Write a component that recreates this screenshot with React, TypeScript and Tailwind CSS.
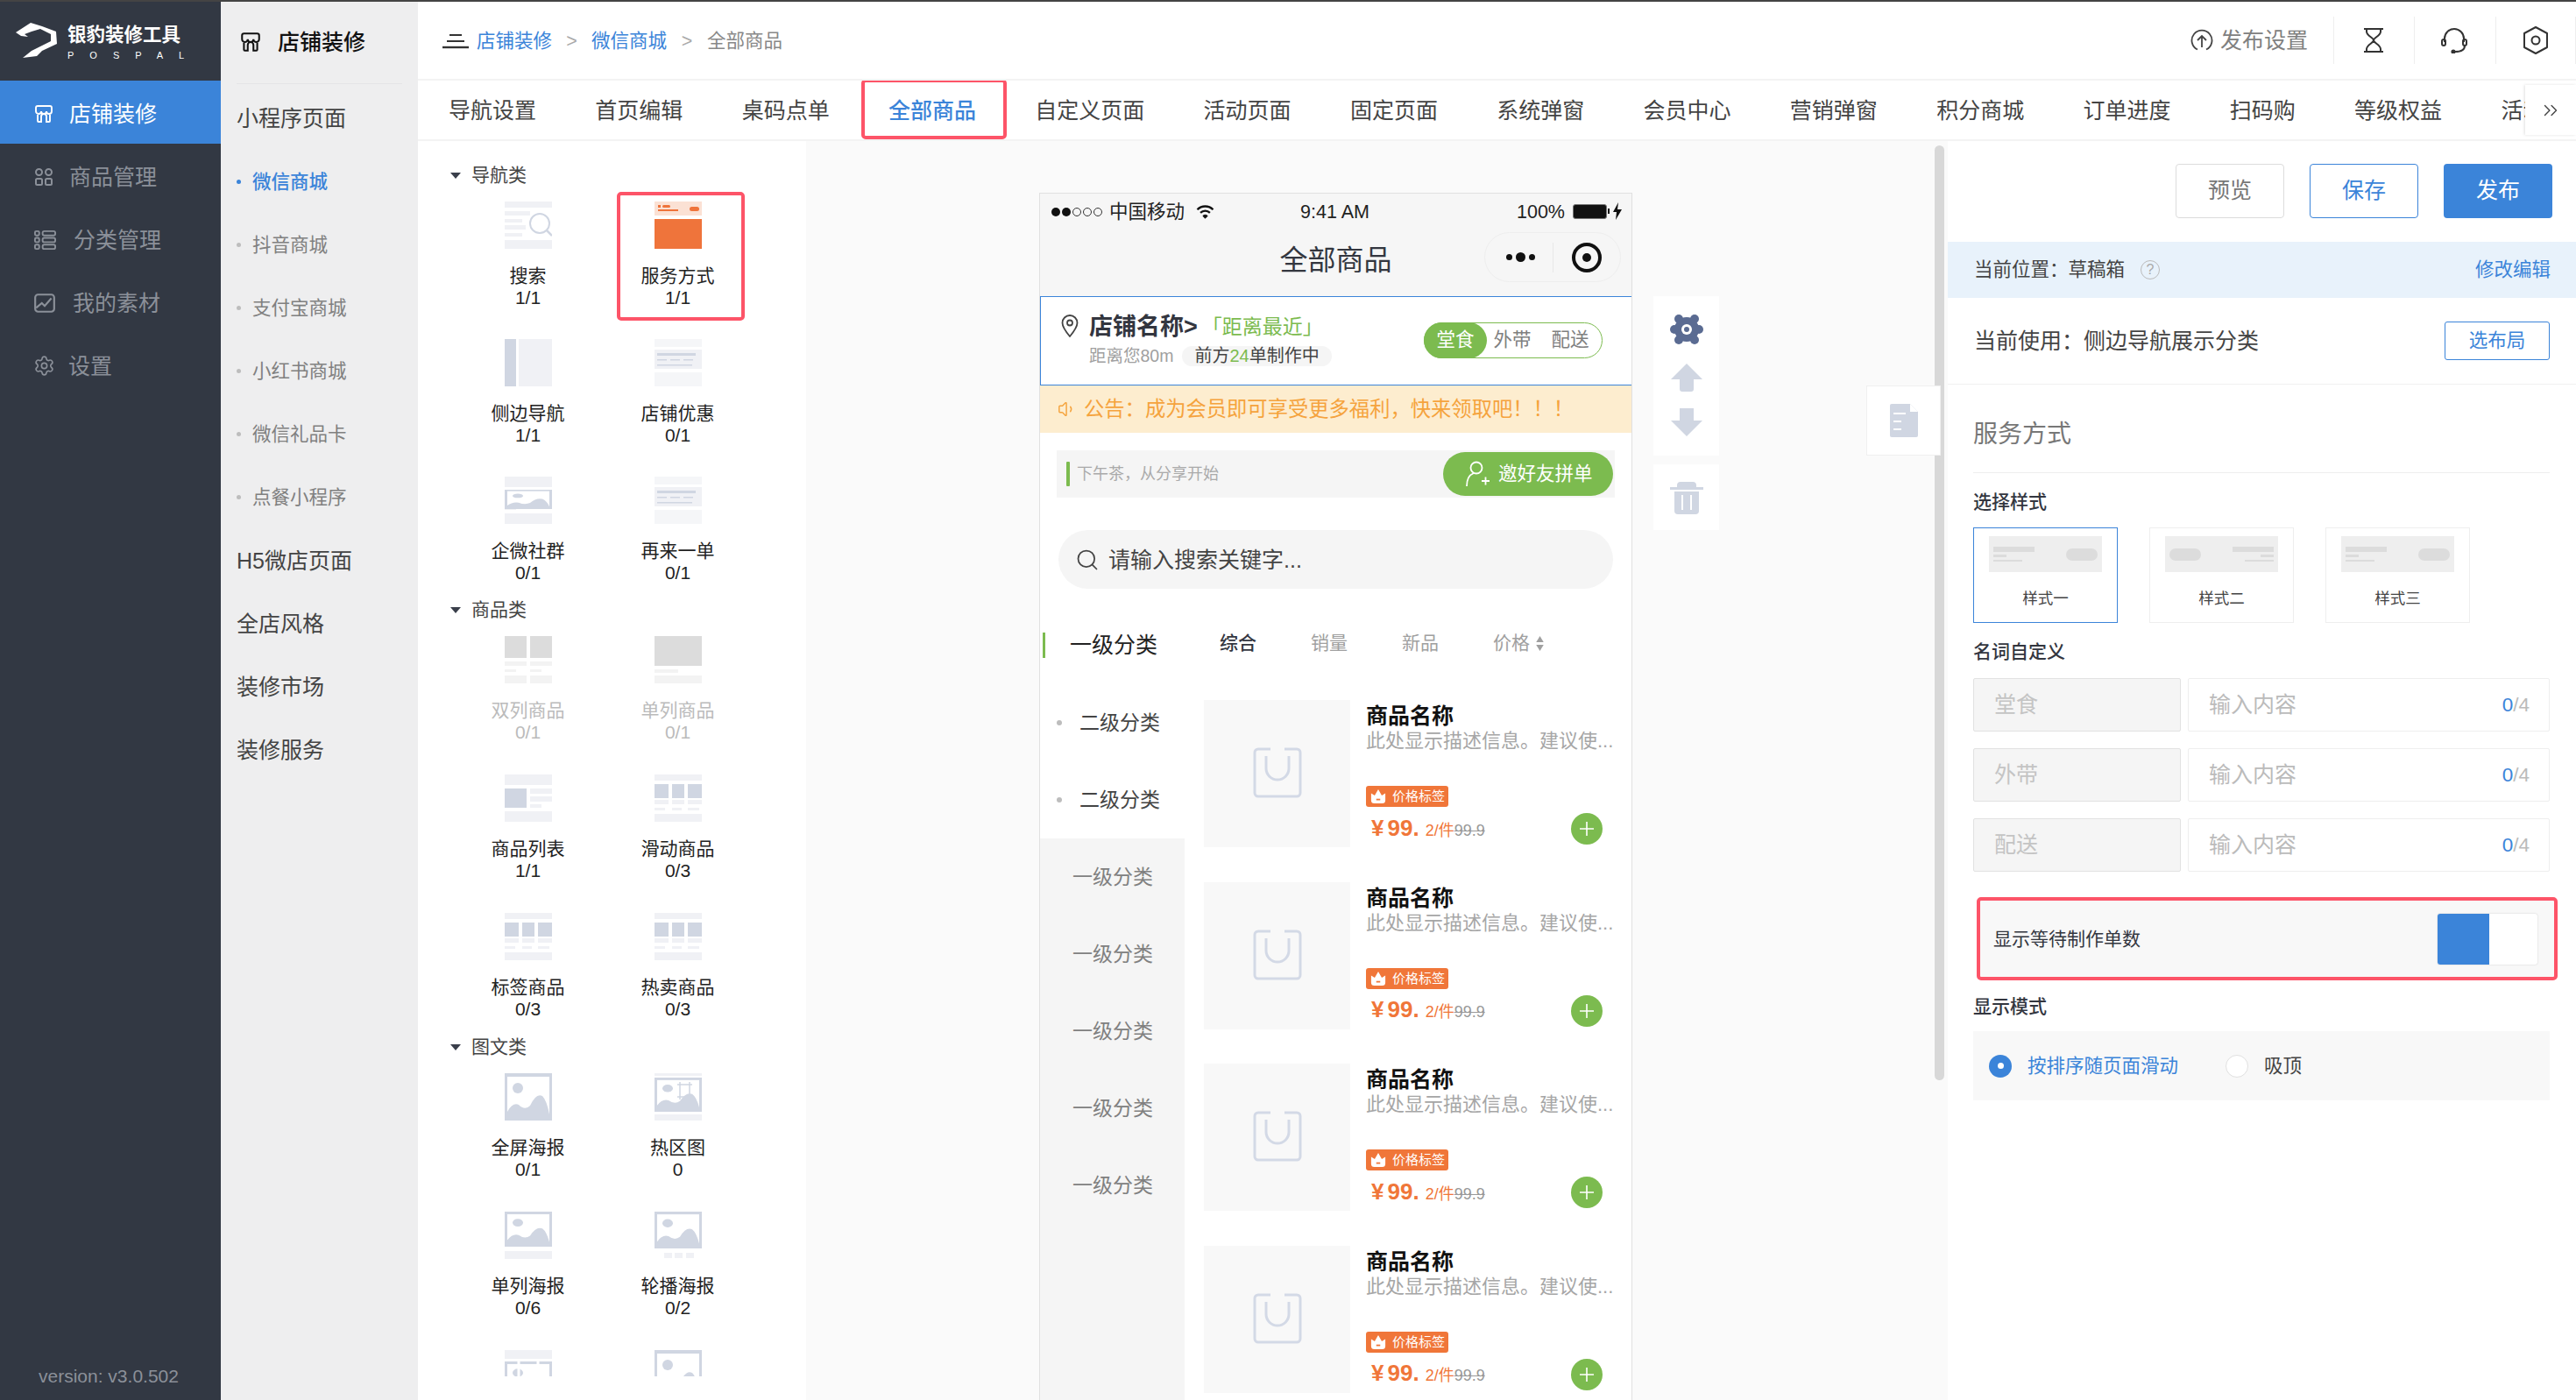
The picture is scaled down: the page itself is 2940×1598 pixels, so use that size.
import React from "react";
import { ChevronsRight, Search, Settings, Volume1 } from "lucide-react";

const DARK = "#d0d6e2";
const LIGHT = "#f0f1f5";

type Box = [number, number, number, number];

function Rects({ items, fill }: { items: Box[]; fill: string }) {
  return (
    <>
      {items.map(([x, y, w, h], i) => (
        <rect key={i} x={x} y={y} width={w} height={h} fill={fill} />
      ))}
    </>
  );
}

// small picture frame with mountains, used by the poster thumbs
function Frame({ y, h, dark = DARK }: { y: number; h: number; dark?: string }) {
  const k = h / 54;
  return (
    <g transform={`translate(0 ${y}) scale(1 ${k})`}>
      <rect width="54" height="54" fill={dark} />
      <rect x="3" y="4" width="48" height="46" fill="#fff" />
      <ellipse cx="15" cy="17" rx="6" ry="6" fill={dark} />
      <path d="M3 44Q9 33 16 36Q23 43 29 37Q36 22 43 26Q48 31 51 47V54H3Z" fill={dark} />
    </g>
  );
}

const thumbs: Record<string, React.ReactNode> = {
  search: (
    <>
      <Rects fill={LIGHT} items={[[0, 0, 54, 7], [0, 11, 29, 5], [0, 20, 20, 4], [0, 27, 24, 5], [0, 36, 20, 4], [0, 44, 54, 10]]} />
      <circle cx="40" cy="25" r="11" fill="#fff" stroke={DARK} strokeWidth="2" />
      <path d="M48 33l6 6" stroke={DARK} strokeWidth="2.5" />
    </>
  ),
  service: (
    <>
      <rect width="54" height="16" fill="#fbe1d4" />
      <rect y="20" width="54" height="34" fill="#ef743b" />
      <rect x="4" y="4" width="3" height="3" fill="#ef743b" />
      <rect x="9" y="4" width="9" height="3" rx="1.5" fill="#ef743b" />
      <rect x="4" y="9" width="23" height="2" fill="#ef743b" />
      <rect x="40" y="6" width="11" height="5" rx="2.5" fill="#ef743b" />
    </>
  ),
  side: (
    <>
      <rect width="13" height="54" fill={DARK} />
      <rect x="16" width="38" height="54" fill={LIGHT} />
    </>
  ),
  coupon: (
    <>
      <Rects fill="#f5f6f8" items={[[0, 0, 54, 9], [0, 38, 54, 16]]} />
      <rect y="12" width="54" height="22" fill={LIGHT} />
      <Rects fill={DARK} items={[[3, 16, 44, 3], [3, 23, 11, 1.5], [18, 23, 11, 1.5], [33, 23, 11, 1.5], [3, 29, 40, 1.5]]} />
    </>
  ),
  wecom: (
    <>
      <Rects fill={LIGHT} items={[[0, 0, 54, 12], [0, 15, 25, 7], [0, 25, 25, 6], [0, 34, 13, 4], [0, 42, 54, 12]]} />
      <Frame y={15} h={22} />
    </>
  ),
  double: (
    <>
      <Rects fill="#dcdcdc" items={[[0, 0, 25, 25], [29, 0, 25, 25]]} />
      <Rects fill="#f3f3f3" items={[[0, 29, 25, 5], [29, 29, 25, 5], [0, 38, 13, 3], [29, 38, 13, 3], [0, 45, 25, 9], [29, 45, 25, 9]]} />
    </>
  ),
  single: (
    <>
      <rect width="54" height="34" fill="#dcdcdc" />
      <Rects fill="#f3f3f3" items={[[0, 38, 27, 4], [0, 45, 54, 9]]} />
    </>
  ),
  list: (
    <>
      <Rects fill={LIGHT} items={[[0, 0, 54, 12], [29, 16, 25, 6], [29, 25, 25, 6], [29, 34, 13, 4], [0, 42, 54, 12]]} />
      <rect y="16" width="25" height="22" fill={DARK} />
    </>
  ),
  slide: (
    <>
      <Rects fill={LIGHT} items={[[0, 0, 54, 7], [0, 29, 16, 5], [20, 29, 14, 5], [38, 29, 16, 5], [0, 38, 12, 3], [20, 38, 11, 3], [38, 38, 13, 3], [0, 45, 54, 9]]} />
      <Rects fill={DARK} items={[[0, 11, 16, 16], [20, 11, 14, 16], [38, 11, 16, 16]]} />
    </>
  ),
  poster: <Frame y={0} h={54} />,
  hot: (
    <>
      <Rects fill={LIGHT} items={[[0, 0, 54, 3], [0, 47, 54, 7]]} />
      <Frame y={5} h={39} />
      <path d="M26 13h17M29 10v20M40 10v20M26 27h17" stroke={DARK} strokeWidth="1.5" fill="none" />
    </>
  ),
  singlePoster: (
    <>
      <Frame y={0} h={40} />
      <rect y="45" width="54" height="9" fill={LIGHT} />
    </>
  ),
  carousel: (
    <>
      <Frame y={0} h={42} />
      <Rects fill={LIGHT} items={[[11, 47, 9, 6], [23, 47, 9, 6], [36, 47, 9, 6]]} />
    </>
  ),
  triple: (
    <>
      <rect width="54" height="10" fill={LIGHT} />
      <Frame y={13} h={41} />
      <path d="M16 13v41M38 13v41" stroke="#fff" strokeWidth="3" />
    </>
  ),
};

type Comp = { name: string; count: string; thumb: string; disabled?: boolean; picked?: boolean; cut?: boolean };
const groups: { title: string; cell: string; items: Comp[] }[] = [
  {
    title: "导航类",
    cell: "h-[157px]",
    items: [
      { name: "搜索", count: "1/1", thumb: "search" },
      { name: "服务方式", count: "1/1", thumb: "service", picked: true },
      { name: "侧边导航", count: "1/1", thumb: "side" },
      { name: "店铺优惠", count: "0/1", thumb: "coupon" },
      { name: "企微社群", count: "0/1", thumb: "wecom" },
      { name: "再来一单", count: "0/1", thumb: "coupon" },
    ],
  },
  {
    title: "商品类",
    cell: "h-[158px]",
    items: [
      { name: "双列商品", count: "0/1", thumb: "double", disabled: true },
      { name: "单列商品", count: "0/1", thumb: "single", disabled: true },
      { name: "商品列表", count: "1/1", thumb: "list" },
      { name: "滑动商品", count: "0/3", thumb: "slide" },
      { name: "标签商品", count: "0/3", thumb: "slide" },
      { name: "热卖商品", count: "0/3", thumb: "slide" },
    ],
  },
  {
    title: "图文类",
    cell: "h-[158px]",
    items: [
      { name: "全屏海报", count: "0/1", thumb: "poster" },
      { name: "热区图", count: "0", thumb: "hot" },
      { name: "单列海报", count: "0/6", thumb: "singlePoster" },
      { name: "轮播海报", count: "0/2", thumb: "carousel" },
      { name: "", count: "", thumb: "triple", cut: true },
      { name: "", count: "", thumb: "poster", cut: true },
    ],
  },
];

const tabs = ["导航设置", "首页编辑", "桌码点单", "全部商品", "自定义页面", "活动页面", "固定页面", "系统弹窗", "会员中心", "营销弹窗", "积分商城", "订单进度", "扫码购", "等级权益", "活动商品"];

function StoreIcon({ className }: { className: string }) {
  return (
    <svg viewBox="0 0 24 24" fill="none" stroke="currentColor" strokeWidth="1.9" className={className}>
      <path d="M5 3h14a2 2 0 0 1 2 2v4a3 3 0 0 1-6 0 3 3 0 0 1-6 0 3 3 0 0 1-6 0V5a2 2 0 0 1 2-2z" />
      <path d="M5 13v7a1 1 0 0 0 1 1h3v-6a3 3 0 0 1 6 0v6h3a1 1 0 0 0 1-1v-7" />
    </svg>
  );
}

function SideMenu() {
  const c = "w-[24px] h-[24px] shrink-0";
  const rows = [
    { label: "商品管理", x: "ml-[17px]", icon: (
      <svg viewBox="0 0 24 24" fill="none" stroke="currentColor" strokeWidth="2" className={c}>
        <circle cx="6.5" cy="6.5" r="3.5" /><circle cx="17.5" cy="6.5" r="3.5" /><rect x="3" y="14" width="7" height="7" rx="1.5" /><rect x="14" y="14" width="7" height="7" rx="1.5" />
      </svg>
    ) },
    { label: "分类管理", x: "ml-[19px]", icon: (
      <svg viewBox="0 0 28 24" fill="none" stroke="currentColor" strokeWidth="2" className="w-[27px] h-[27px] shrink-0">
        <rect x="2" y="2" width="5" height="5" rx="1.5" /><rect x="2" y="10" width="5" height="5" rx="1.5" /><rect x="2" y="18" width="5" height="5" rx="1.5" />
        <rect x="11" y="2" width="15" height="5" rx="2" /><rect x="11" y="10" width="15" height="5" rx="2" /><rect x="11" y="18" width="15" height="5" rx="2" />
      </svg>
    ) },
    { label: "我的素材", x: "ml-[19px]", icon: (
      <svg viewBox="0 0 24 24" fill="none" stroke="currentColor" strokeWidth="2" className="w-[26px] h-[26px] shrink-0">
        <rect x="2" y="3" width="20" height="18" rx="3" /><path d="M3 17l6-5 3 3 7-8" />
      </svg>
    ) },
    { label: "设置", x: "ml-[15px]", icon: <Settings className="w-[25px] h-[25px] shrink-0" strokeWidth={1.6} /> },
  ];
  return (
    <aside className="w-[252px] shrink-0 bg-[#323843] relative flex flex-col">
      <div className="h-[90px] shrink-0 flex items-start pl-[18px] pt-[23px]">
        <svg viewBox="0 0 48 42" className="w-[48px] h-[42px] shrink-0" fill="#fff">
          <path d="M0 12L17 1L30 5L46 11L47 25L30 33L24 39L8 41L18 33L28 28L40 22L40 14L28 8L18 11L10 14L14 17L6 16Z" />
        </svg>
        <div className="ml-[11px] text-white">
          <div className="text-[21.5px] leading-[30px] font-bold whitespace-nowrap">银豹装修工具</div>
          <div className="text-[11px] leading-[12px] tracking-[18px] mt-[2px] whitespace-nowrap">POSPAL</div>
        </div>
      </div>
      <div className="h-[72px] bg-[#3b84d9] text-white flex items-center pl-[38px] pt-[3px]">
        <StoreIcon className="w-[24px] h-[24px] shrink-0" />
        <span className="ml-[17px] text-[25px] leading-[32px]">店铺装修</span>
      </div>
      {rows.map((r) => (
        <div key={r.label} className="h-[72px] text-[#8b9099] flex items-center pl-[38px] pt-[3px]">
          {r.icon}
          <span className={`${r.x} text-[25px] leading-[32px]`}>{r.label}</span>
        </div>
      ))}
      <div className="absolute left-[44px] bottom-[15px] text-[21px] leading-[24px] text-[#8b9099]">version: v3.0.502</div>
    </aside>
  );
}

function SubMenu() {
  const subs = ["微信商城", "抖音商城", "支付宝商城", "小红书商城", "微信礼品卡", "点餐小程序"];
  const big = ["H5微店页面", "全店风格", "装修市场", "装修服务"];
  return (
    <aside className="w-[225px] shrink-0 bg-[#eeeeef] px-[18px]">
      <div className="h-[94px] border-b border-[#e4e4e6] flex items-center pl-[3px] pb-[1px] text-[#111]">
        <StoreIcon className="w-[26px] h-[26px] shrink-0" />
        <span className="ml-[18px] text-[25px] leading-[32px] font-medium">店铺装修</span>
      </div>
      <div className="h-[77px] flex items-center text-[25px] text-[#444] pt-[3px]">小程序页面</div>
      {subs.map((s, i) => (
        <div key={s} className={`h-[72px] flex items-center pb-[3px] ${i === 0 ? "text-[#3b84d9] font-medium" : "text-[#808080]"}`}>
          <span className={`w-[5px] h-[5px] rounded-full shrink-0 ${i === 0 ? "bg-[#3b84d9]" : "bg-[#bdbdbd]"}`} />
          <span className="ml-[13px] text-[21.5px] leading-[28px]">{s}</span>
        </div>
      ))}
      {big.map((s) => (
        <div key={s} className="h-[72px] flex items-center text-[25px] text-[#444]">{s}</div>
      ))}
    </aside>
  );
}

function TopBar() {
  return (
    <header className="h-[90px] shrink-0 border-b-2 border-[#f3f3f3] flex items-center pl-[28px]">
      <svg viewBox="0 0 30 18" className="w-[30px] h-[18px] shrink-0 mt-[2px]" stroke="#333" fill="none">
        <path d="M8 2h14M5 9h20" strokeWidth="2" /><path d="M0 16h30" strokeWidth="2.4" />
      </svg>
      <div className="ml-[9px] pt-[2px] flex items-center text-[21.5px] leading-[28px] text-[#3b84d9] whitespace-nowrap">
        <span>店铺装修</span>
        <span className="w-[45px] text-center text-[#aaa]">&gt;</span>
        <span>微信商城</span>
        <span className="w-[46px] text-center text-[#aaa]">&gt;</span>
        <span className="text-[#888]">全部商品</span>
      </div>
      <div className="ml-auto flex items-center h-[54px]">
        <svg viewBox="0 0 26 26" fill="none" stroke="#444" strokeWidth="1.8" className="w-[26px] h-[26px]">
          <path d="M8 23.5A11.5 11.5 0 1 1 18 23.5" /><path d="M13 21V8M8 13l5-5 5 5" />
        </svg>
        <span className="ml-[8px] mr-[29px] text-[25px] leading-[32px] text-[#808080]">发布设置</span>
        <div className="w-[92px] h-full border-l border-[#eee] flex items-center justify-center pr-[2px]">
          <svg viewBox="0 0 24 30" fill="none" stroke="#333" strokeWidth="2" className="w-[24px] h-[30px]">
            <path d="M1 2h22M1 28h22M4 2v3c0 5 8 7 8 10c0-3 8-5 8-10V2M4 28v-3c0-5 8-7 8-10c0 3 8 5 8 10v3" />
          </svg>
        </div>
        <div className="w-[93px] h-full border-l border-[#eee] flex items-center justify-center pr-[2px]">
          <svg viewBox="0 0 30 30" fill="none" stroke="#333" strokeWidth="2" className="w-[30px] h-[30px]">
            <path d="M4 17V13a11 11 0 0 1 22 0v4" /><rect x="1" y="14" width="4" height="7" rx="2" /><rect x="25" y="14" width="4" height="7" rx="2" /><path d="M27 21c0 5-5 7-11 7" /><circle cx="14" cy="28" r="1.6" fill="#333" />
          </svg>
        </div>
        <div className="w-[92px] h-full border-x border-[#eee] flex items-center justify-center">
          <svg viewBox="0 0 32 34" fill="none" stroke="#333" strokeWidth="2" className="w-[32px] h-[34px]">
            <path d="M16 2l13 7v16l-13 7-13-7V9z" strokeLinejoin="round" /><circle cx="16" cy="17" r="4.5" />
          </svg>
        </div>
      </div>
    </header>
  );
}

function TabBar() {
  return (
    <nav className="relative h-[69px] shrink-0 border-b-2 border-[#f3f3f3] overflow-hidden">
      <div className="flex items-center h-full pl-[35px] gap-[67.3px] whitespace-nowrap">
        {tabs.map((t) => (
          <div key={t} className={`relative text-[25px] leading-[32px] shrink-0 ${t === "全部商品" ? "text-[#3b84d9] font-medium" : "text-[#444]"}`}>
            {t}
            {t === "全部商品" && <span className="absolute -left-[31px] -right-[35px] -top-[20px] -bottom-[17px] border-[4px] border-[#fd5468] rounded-[5px]" />}
          </div>
        ))}
      </div>
      <div className="absolute right-0 top-[5px] w-[58px] h-[57px] bg-white shadow-[-1px_0_3px_rgba(0,0,0,0.12)] flex items-center justify-center">
        <ChevronsRight className="w-[26px] h-[30px] text-[#444]" strokeWidth={1.3} />
      </div>
    </nav>
  );
}

function ComponentPanel() {
  return (
    <div className="w-[443px] shrink-0 bg-white pl-[40px] pt-[29px] overflow-hidden h-full">
      {groups.map((g) => (
        <section key={g.title}>
          <div className="h-[20px] mb-[5px] flex items-center text-[21px] text-[#444]">
            <span className="w-0 h-0 border-x-[6.5px] border-x-transparent border-t-[7px] border-t-[#3a3f4b] -ml-[3px]" />
            <span className="ml-[12px]">{g.title}</span>
          </div>
          <div className="grid grid-cols-[171px_171px]">
            {g.items.map((c, i) => (
              <div key={i} className={`relative flex flex-col items-center pt-[15px] ${g.cell} ${c.disabled ? "text-[#bbbbbb]" : "text-[#222]"} text-[21px] leading-[25px]`}>
                <div className={c.cut ? "w-[54px] h-[30px] overflow-hidden shrink-0" : "w-[54px] h-[54px] shrink-0"}>
                  <svg viewBox="0 0 54 54" className="w-[54px] h-[54px] block">{thumbs[c.thumb]}</svg>
                </div>
                <div className="mt-[18px] whitespace-nowrap">{c.name}</div>
                <div>{c.count}</div>
                {c.picked && <span className="absolute left-[16px] top-[4px] w-[146px] h-[147px] border-[4px] border-[#fd5468] rounded-[5px]" />}
              </div>
            ))}
          </div>
        </section>
      ))}
    </div>
  );
}

function Bag() {
  return (
    <svg viewBox="0 0 56 58" fill="none" stroke="#d3d9e6" strokeWidth="3" className="w-[56px] h-[58px]">
      <path d="M20 2H6a4 4 0 0 0-4 4v46a4 4 0 0 0 4 4h44a4 4 0 0 0 4-4V6a4 4 0 0 0-4-4H36" />
      <path d="M15 10v14a13 13 0 0 0 26 0V10" />
    </svg>
  );
}

function Product() {
  return (
    <div className="flex h-[168px] mb-[39.5px] shrink-0">
      <div className="w-[167px] shrink-0 bg-[#f8f8f8] flex items-center justify-center pb-[2px]"><Bag /></div>
      <div className="ml-[18px] w-[282px] pt-[3px]">
        <div className="text-[25px] leading-[30px] font-bold text-[#111]">商品名称</div>
        <div className="text-[22px] leading-[28px] text-[#a6a6a6] whitespace-nowrap">此处显示描述信息。建议使...</div>
        <div className="mt-[37px] w-[94px] h-[24px] rounded-[3px] bg-[#f07639] flex items-center pl-[5px] text-white">
          <svg viewBox="0 0 20 20" className="w-[18px] h-[20px] shrink-0" fill="#fff">
            <path d="M1 6l4.5 3L10 1l4.5 8L19 6v9a4 4 0 0 1-4 4H5a4 4 0 0 1-4-4z" /><rect x="7.5" y="13" width="5" height="2" fill="#f07639" />
          </svg>
          <span className="ml-[7px] text-[15px] leading-[20px] whitespace-nowrap">价格标签</span>
        </div>
        <div className="mt-[7px] w-[270px] h-[36px] flex items-center justify-between">
          <div className="flex items-baseline text-[#f07639] pl-[6px] leading-[30px] whitespace-nowrap">
            <span className="text-[26px] font-bold">¥</span>
            <span className="ml-[4px] text-[26px] font-bold">99.</span>
            <span className="ml-[7px] text-[18px]">2/件</span>
            <span className="text-[18px] text-[#999] line-through">99.9</span>
          </div>
          <div className="w-[36px] h-[36px] rounded-full bg-[#7cbb4f] flex items-center justify-center">
            <svg viewBox="0 0 16 16" className="w-[16px] h-[16px]" stroke="#fff" strokeWidth="1.6"><path d="M8 0v16M0 8h16" /></svg>
          </div>
        </div>
      </div>
    </div>
  );
}

function Phone() {
  return (
    <div className="w-[677px] shrink-0 h-[1379px] border-x border-t border-[#e0e0e0] bg-white flex flex-col overflow-hidden">
      <div className="bg-[#f6f6f6] h-[117px] shrink-0 flex flex-col">
        <div className="h-[41px] relative flex items-center pl-[13px] text-[21.5px] leading-[26px] text-[#222]">
          <div className="flex items-center gap-[2px]">
            <span className="w-[10px] h-[10px] rounded-full bg-[#111]" />
            <span className="w-[10px] h-[10px] rounded-full bg-[#111]" />
            <span className="w-[10px] h-[10px] rounded-full border border-[#333]" />
            <span className="w-[10px] h-[10px] rounded-full border border-[#333]" />
            <span className="w-[10px] h-[10px] rounded-full border border-[#333]" />
          </div>
          <span className="ml-[8px]">中国移动</span>
          <svg viewBox="0 0 24 20" className="ml-[12px] w-[23px] h-[18px]" fill="none" stroke="#111" strokeWidth="2.6">
            <path d="M2 7a14 14 0 0 1 20 0M6 11a8.500 8.500 0 0 1 12 0" /><path d="M12 18l-3-3a4 4 0 0 1 6 0z" fill="#111" strokeWidth="1" />
          </svg>
          <span className="absolute left-[297px]">9:41 AM</span>
          <span className="absolute left-[544px]">100%</span>
          <span className="absolute left-[608px] top-[12px] w-[39px] h-[17px] bg-[#111] rounded-[3px] border border-[#777]" />
          <span className="absolute left-[648px] top-[17px] w-[2px] h-[6px] bg-[#111]" />
          <svg viewBox="0 0 10 20" className="absolute left-[654px] top-[10px] w-[10px] h-[20px]" fill="#111"><path d="M6 0L0 11h4l-1 9 7-12H5z" /></svg>
        </div>
        <div className="relative flex-1 flex items-center justify-center pb-[7px] text-[32px] leading-[40px] text-[#33363f]">
          全部商品
          <div className="absolute right-[12px] top-[3px] w-[156px] h-[57px] rounded-full border border-[#eeeeee] flex items-center">
            <div className="w-[77px] flex items-center justify-center gap-[4px] pl-[3px]">
              <span className="w-[7px] h-[7px] rounded-full bg-[#111]" />
              <span className="w-[11px] h-[11px] rounded-full bg-[#111]" />
              <span className="w-[7px] h-[7px] rounded-full bg-[#111]" />
            </div>
            <span className="h-[34px] border-l border-[#e8e8e8]" />
            <div className="flex-1 flex items-center justify-center">
              <span className="w-[34px] h-[34px] rounded-full border-[4px] border-[#111] flex items-center justify-center">
                <span className="w-[10px] h-[10px] rounded-full bg-[#111]" />
              </span>
            </div>
          </div>
        </div>
      </div>

      <div className="h-[102px] shrink-0 border border-[#3b84d9] -mr-[1px] flex items-start relative">
        <svg viewBox="0 0 20 26" fill="none" stroke="#444" strokeWidth="1.8" className="absolute left-[23px] top-[20px] w-[20px] h-[26px]">
          <path d="M10 25C5 19 1.500 14 1.500 9.500a8.500 8.500 0 0 1 17 0C18.500 14 15 19 10 25z" /><circle cx="10" cy="9.500" r="3" />
        </svg>
        <div className="ml-[55px] mt-[16px]">
          <div className="flex items-center h-[36px] whitespace-nowrap">
            <span className="text-[27px] leading-[36px] font-bold text-[#33363f]">店铺名称&gt;</span>
            <span className="ml-[5px] text-[23px] leading-[32px] text-[#7cbb4f]">「距离最近」</span>
          </div>
          <div className="flex items-center h-[24px] mt-[3px] whitespace-nowrap">
            <span className="text-[19.5px] leading-[24px] text-[#a0a0a0]">距离您80m</span>
            <span className="ml-[10px] h-[23px] px-[14px] rounded-full bg-[#f5f5f5] text-[20px] leading-[23px] text-[#444]">前方<span className="text-[#7cbb4f]">24</span>单制作中</span>
          </div>
        </div>
        <div className="absolute left-[437px] top-[29px] w-[204px] h-[41px] rounded-full border border-[#7cbb4f] flex items-center text-[21.5px] text-[#808080]">
          <span className="w-[72px] -ml-[1px] h-[41px] rounded-full bg-[#7cbb4f] text-white flex items-center justify-center shrink-0">堂食</span>
          <span className="w-[58px] text-center shrink-0">外带</span>
          <span className="w-[74px] text-center shrink-0">配送</span>
        </div>
      </div>

      <div className="h-[54px] shrink-0 bg-[#fdedcf] flex items-center pl-[20px] pb-[1px] text-[#f5a33d]">
        <Volume1 className="w-[22px] h-[22px] shrink-0" strokeWidth={1.6} />
        <span className="ml-[8px] text-[23.3px] leading-[30px] whitespace-nowrap">公告：成为会员即可享受更多福利，快来领取吧！！！</span>
      </div>

      <div className="mt-[20px] mx-[19px] h-[54px] shrink-0 bg-[#f5f5f5] flex items-center pl-[11px] relative">
        <span className="w-[4px] h-[28px] bg-[#7cbb4f] rounded-[1px]" />
        <span className="ml-[8px] text-[18px] text-[#aaaaaa] whitespace-nowrap">下午茶，从分享开始</span>
        <div className="absolute right-[2px] top-[2px] w-[194px] h-[50px] rounded-full bg-[#7cbb4f] flex items-center pl-[25px] text-white">
          <svg viewBox="0 0 28 30" fill="none" stroke="#fff" strokeWidth="1.800" className="w-[28px] h-[30px] shrink-0">
            <circle cx="13" cy="8" r="6.500" /><path d="M2 29c0-8 3-13 8-15M19 23h9M23.500 18.500v9" />
          </svg>
          <span className="ml-[10px] text-[21.500px] leading-[28px] whitespace-nowrap">邀好友拼单</span>
        </div>
      </div>

      <div className="mt-[37px] mb-[1px] mx-[21px] h-[67px] shrink-0 rounded-full bg-[#f5f5f5] flex items-center pl-[19px] text-[#444]">
        <Search className="w-[28px] h-[28px] shrink-0" strokeWidth={1.500} />
        <span className="ml-[10px] text-[25px] leading-[32px] whitespace-nowrap">请输入搜索关键字...</span>
      </div>

      <div className="flex-1 flex min-h-0">
        <div className="w-[165px] shrink-0 flex flex-col pt-[20px]">
          <div className="h-[88px] shrink-0 flex items-center relative text-[25px] text-[#222] pl-[34px]">
            <span className="absolute left-[3px] top-[29px] w-[3px] h-[29px] bg-[#7cbb4f]" />
            一级分类
          </div>
          {[0, 1].map((i) => (
            <div key={i} className="h-[88px] shrink-0 flex items-center pl-[19px] text-[23px] text-[#444]">
              <span className="w-[6px] h-[6px] rounded-full bg-[#bdbdbd]" />
              <span className="ml-[20px]">二级分类</span>
            </div>
          ))}
          <div className="flex-1 bg-[#f5f5f5] text-[23px] text-[#808080]">
            {[0, 1, 2, 3, 4].map((i) => (
              <div key={i} className="h-[88px] flex items-center pl-[37px]">一级分类</div>
            ))}
          </div>
        </div>
        <div className="flex-1 pl-[22px] flex flex-col min-w-0">
          <div className="mt-[39px] h-[44px] shrink-0 flex items-center gap-[62px] pl-[18px] text-[21px] text-[#a0a0a0]">
            <span className="text-[#33363f] font-medium">综合</span>
            <span>销量</span>
            <span>新品</span>
            <span className="flex items-center">价格
              <svg viewBox="0 0 8 16" className="ml-[7px] w-[9px] h-[17px] shrink-0" fill="#a0a0a0"><path d="M4 0l4 6.500H0zM4 16l4-6.500H0z" /></svg>
            </span>
          </div>
          <div className="mt-[43px] flex flex-col">
            {[0, 1, 2, 3].map((i) => <Product key={i} />)}
          </div>
        </div>
      </div>
    </div>
  );
}

function ToolCards() {
  return (
    <div className="ml-[24px] w-[75px] shrink-0 pt-[118px] flex flex-col gap-[10px]">
      <div className="h-[182px] bg-white flex flex-col items-center pt-[20px] gap-[18px]">
        <svg viewBox="0 0 38 36" className="w-[38px] h-[36px]">
          <g fill="#5a6b92">
            <circle cx="19" cy="18" r="14" />
            <circle cx="10" cy="6" r="5" /><circle cx="28" cy="6" r="5" /><circle cx="5" cy="18" r="5" /><circle cx="33" cy="18" r="5" /><circle cx="10" cy="30" r="5" /><circle cx="28" cy="30" r="5" />
          </g>
          <circle cx="19" cy="18" r="6" fill="#fff" /><circle cx="19" cy="18" r="3" fill="#5a6b92" />
        </svg>
        <svg viewBox="0 0 36 32" className="w-[36px] h-[32px] mt-[3px]" fill={DARK}><path d="M18 0l18 18H26v11a3 3 0 0 1-3 3H13a3 3 0 0 1-3-3V18H0z" /></svg>
        <svg viewBox="0 0 36 32" className="w-[36px] h-[32px] mt-[1px]" fill={DARK}><path d="M18 32L0 14h10V0h16v14h10z" /></svg>
      </div>
      <div className="h-[75px] bg-white flex items-center justify-center">
        <svg viewBox="0 0 38 38" className="w-[38px] h-[38px]">
          <path d="M8 5a4 4 0 0 1 4-4h14a4 4 0 0 1 4 4v2h8v3H0V7h8z" fill={DARK} />
          <path d="M5 12h28v22a4 4 0 0 1-4 4H9a4 4 0 0 1-4-4z" fill={DARK} />
          <path d="M14 16v17M24 16v17" stroke="#fff" strokeWidth="2" />
        </svg>
      </div>
    </div>
  );
}

function Canvas() {
  return (
    <div className="relative flex-1 h-full bg-[#fafafa] pl-[266px] pt-[59px] flex items-start overflow-hidden">
      <Phone />
      <ToolCards />
      <div className="absolute right-[4px] top-[5px] w-[11px] h-[1067px] rounded-full bg-[#d8d8d8]" />
      <div className="absolute left-[1210px] top-[279px] w-[85px] h-[80px] bg-white border border-[#f0f0f0] flex items-center justify-center">
        <svg viewBox="0 0 32 38" className="w-[32px] h-[38px]">
          <path d="M2 0h21l9 9v27a2 2 0 0 1-2 2H2a2 2 0 0 1-2-2V2a2 2 0 0 1 2-2z" fill={DARK} />
          <path d="M23 0v9h9z" fill="#fff" />
          <path d="M4 11h14M4 20h9M4 29h9" stroke="#fff" strokeWidth="2" />
        </svg>
      </div>
    </div>
  );
}

function Settings_() {
  const styles = ["样式一", "样式二", "样式三"];
  const names = ["堂食", "外带", "配送"];
  return (
    <div className="w-[717px] shrink-0 h-full bg-white overflow-hidden">
      <div className="pt-[26px] pr-[27px] flex justify-end gap-[29px] text-[25px]">
        <button className="w-[124px] h-[62px] rounded-[4px] border border-[#dcdcdc] text-[#777]">预览</button>
        <button className="w-[124px] h-[62px] rounded-[4px] border border-[#3b84d9] text-[#3b84d9]">保存</button>
        <button className="w-[124px] h-[62px] rounded-[4px] bg-[#3b84d9] text-white">发布</button>
      </div>
      <div className="mt-[27px] h-[64px] bg-[#e8f2fb] flex items-center pl-[30px] pr-[29px] text-[21.500px] leading-[28px]">
        <span className="text-[#444]">当前位置：草稿箱</span>
        <span className="ml-[18px] w-[22px] h-[22px] rounded-full border border-[#bbb] text-[#aaa] text-[16px] flex items-center justify-center">?</span>
        <span className="ml-auto text-[#3b84d9]">修改编辑</span>
      </div>
      <div className="h-[99px] border-b border-[#f0f0f0] flex items-center justify-between pl-[30px] pr-[30px]">
        <span className="text-[25px] text-[#444] pt-[2px]">当前使用：侧边导航展示分类</span>
        <button className="w-[120px] h-[44px] rounded-[3px] border border-[#3b84d9] text-[#3b84d9] text-[21.500px] leading-[28px]">选布局</button>
      </div>
      <div className="pl-[29px] pr-[30px]">
        <div className="pt-[37px] pb-[23px] border-b border-[#eeeeee] text-[28px] leading-[40px] text-[#777]">服务方式</div>
        <div className="mt-[18px] h-[30px] text-[21px] leading-[30px] font-medium text-[#33363f]">选择样式</div>
        <div className="mt-[14px] flex gap-[36px]">
          {styles.map((s, i) => (
            <div key={s} className={`w-[165px] h-[109px] border ${i === 0 ? "border-[#3b84d9]" : "border-[#eeeeee]"} flex flex-col items-center pt-[9px]`}>
              <div className={`w-[129px] h-[41px] bg-[#eeeeee] relative flex items-center px-[5px] ${i === 1 ? "flex-row-reverse" : ""}`}>
                <div className={`flex-1 flex flex-col gap-[3px] ${i === 1 ? "items-end" : "items-start"}`}>
                  <span className="w-[47px] h-[6px] bg-[#dcdcdc]" />
                  <span className="w-[15px] h-[3px] bg-[#dcdcdc]" />
                  <span className="w-[33px] h-[2px] bg-[#dcdcdc]" />
                </div>
                <span className="w-[36px] h-[14px] rounded-full bg-[#dcdcdc] shrink-0" />
              </div>
              <span className="mt-[18px] text-[17.500px] leading-[24px] text-[#444]">{s}</span>
            </div>
          ))}
        </div>
        <div className="mt-[18px] h-[30px] text-[21px] leading-[30px] font-medium text-[#33363f]">名词自定义</div>
        <div className="mt-[15px] flex flex-col gap-[19px]">
          {names.map((n) => (
            <div key={n} className="flex gap-[8px] h-[61px]">
              <div className="w-[237px] rounded-[2px] border border-[#e2e2e2] bg-[#f5f5f5] flex items-center pl-[23px] text-[25px] text-[#c4c4c4]">{n}</div>
              <div className="flex-1 rounded-[2px] border border-[#eeeeee] flex items-center pl-[23px] pr-[22px] justify-between text-[25px] text-[#bbbbbb]">
                <span>输入内容</span>
                <span className="text-[22.5px]"><span className="text-[#3b84d9]">0</span>/4</span>
              </div>
            </div>
          ))}
        </div>
        <div className="mt-[29px] ml-[4px] -mr-[9px] h-[95px] border-[4px] border-[#fd5468] rounded-[5px] bg-[#f8f8f8] flex items-center pl-[15px] pr-[19px] justify-between">
          <span className="text-[21px] leading-[28px] text-[#33363f]">显示等待制作单数</span>
          <div className="w-[114px] h-[58px] rounded-[3px] bg-white shadow-[0_0_2px_rgba(0,0,0,0.2)] flex overflow-hidden">
            <span className="w-[59px] h-full bg-[#3b84d9]" />
          </div>
        </div>
        <div className="mt-[15px] h-[30px] text-[21px] leading-[30px] font-medium text-[#33363f]">显示模式</div>
        <div className="mt-[13px] h-[79px] bg-[#f8f8f8] flex items-center pl-[18px] text-[21.500px] leading-[28px]">
          <span className="w-[26px] h-[26px] rounded-full bg-[#3b84d9] flex items-center justify-center">
            <span className="w-[7px] h-[7px] rounded-full bg-white" />
          </span>
          <span className="ml-[18px] text-[#3b84d9]">按排序随页面滑动</span>
          <span className="ml-[54px] w-[26px] h-[26px] rounded-full bg-white border border-[#e0e0e0]" />
          <span className="ml-[18px] text-[#444]">吸顶</span>
        </div>
      </div>
    </div>
  );
}

export default function App() {
  return (
    <div className="w-[2940px] h-[1598px] flex flex-col overflow-hidden bg-white [font-family:'Liberation_Sans','Noto_Sans_CJK_SC',sans-serif]">
      <div className="h-[2px] shrink-0 bg-[#444444]" />
      <div className="flex-1 flex min-h-0">
        <SideMenu />
        <SubMenu />
        <main className="flex-1 min-w-0 flex flex-col">
          <TopBar />
          <TabBar />
          <div className="flex-1 flex min-h-0">
            <ComponentPanel />
            <Canvas />
            <Settings_ />
          </div>
        </main>
      </div>
    </div>
  );
}
